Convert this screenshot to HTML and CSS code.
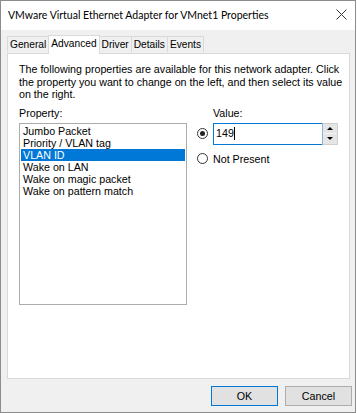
FILE: index.html
```html
<!DOCTYPE html>
<html lang="en">
<head>
    <meta charset="UTF-8">
    <title>VMware Virtual Ethernet Adapter for VMnet1 Properties</title>
    <link rel="stylesheet" href="styles.css">
</head>
<body>
    <div class="window">
        <div class="titlebar">
            <span class="title">VMware Virtual Ethernet Adapter for VMnet1 Properties</span>
            <svg class="close" width="11" height="11" viewBox="0 0 11 11">
                <path d="M0.5 0.5 L10.5 10.5 M10.5 0.5 L0.5 10.5" stroke="#333" stroke-width="1" fill="none"/>
            </svg>
        </div>

        <div class="client">
            <div class="tabs">
                <div class="tab">General</div>
                <div class="tab active">Advanced</div>
                <div class="tab">Driver</div>
                <div class="tab">Details</div>
                <div class="tab">Events</div>
            </div>

            <div class="panel">
                <p class="explicacion">
                    The following properties are available for this network adapter. Click<br>
                    the property you want to change on the left, and then select its value<br>
                    on the right.
                </p>

                <div class="campos">
                    <div class="col-prop">
                        <label>Property:</label>
                        <ul class="lista">
                            <li>Jumbo Packet</li>
                            <li>Priority / VLAN tag</li>
                            <li class="sel">VLAN ID</li>
                            <li>Wake on LAN</li>
                            <li>Wake on magic packet</li>
                            <li>Wake on pattern match</li>
                        </ul>
                    </div>

                    <div class="col-valor">
                        <label class="valor-label">Value:</label>
                        <div class="fila">
                            <span class="radio checked"></span>
                            <div class="spin">
                                <div class="spin-input">149<span class="caret"></span></div>
                                <div class="spin-btns">
                                    <div class="spin-btn"><span class="arr up"></span></div>
                                    <div class="spin-btn"><span class="arr down"></span></div>
                                </div>
                            </div>
                        </div>
                        <div class="fila fila-np">
                            <span class="radio"></span>
                            <span>Not Present</span>
                        </div>
                    </div>
                </div>
            </div>

            <div class="botones">
                <button class="btn btn-ok">OK</button>
                <button class="btn">Cancel</button>
            </div>
        </div>
    </div>
</body>
</html>
```

FILE: styles.css
```css
html, body {
    margin: 0;
    padding: 0;
    background-color: #fff;
}
body {
    font-family: "Liberation Sans", Arial, sans-serif;
    font-size: 10.7px;
    color: #000;
}
.window {
    width: 356px;
    height: 413px;
    box-sizing: border-box;
    border: 1px solid #8c8c8c;
    display: flex;
    flex-direction: column;
    background-color: #f0f0f0;
}
.titlebar {
    height: 29px;
    background-color: #fff;
    display: flex;
    align-items: center;
    padding: 0 0 2px 7px;
    box-sizing: border-box;
}
.title {
    font-family: Lato, "Noto Sans", sans-serif;
    font-size: 10.5px;
    flex: 1;
    color: #000;
}
.close {
    margin-right: 8px;
}
.client {
    flex: 1;
    padding: 0 5px 0 6px;
    display: flex;
    flex-direction: column;
}
.tabs {
    display: flex;
    align-items: flex-end;
    height: 21px;
    margin-top: 2px;
    position: relative;
    z-index: 1;
}
.tab {
    height: 15px;
    line-height: 16px;
    font-size: 10.2px;
    padding: 0 2px;
    border: 1px solid #d9d9d9;
    border-bottom: none;
    border-right: none;
    background-color: #f0f0f0;
    margin-bottom: 1px;
}
.tab:last-child {
    border-right: 1px solid #d9d9d9;
}
.tab.active {
    height: 18px;
    line-height: 15px;
    background-color: #fff;
    border-right: 1px solid #d9d9d9;
    margin-bottom: -1px;
    padding: 0 2px;
}
.tab.active + .tab {
    border-left: none;
}
.panel {
    height: 326px;
    box-sizing: border-box;
    background-color: #fff;
    border: 1px solid #d9d9d9;
    padding: 9px 10px 0 11px;
}
.explicacion {
    margin: 0;
    line-height: 12.5px;
    white-space: nowrap;
}
.campos {
    display: flex;
    margin-top: 6px;
}
.col-prop {
    width: 168px;
    display: flex;
    flex-direction: column;
}
label {
    display: block;
    height: 13px;
    line-height: 13px;
    margin-bottom: 3px;
}
.lista {
    list-style: none;
    margin: 0;
    padding: 1px 1px;
    height: 182px;
    box-sizing: border-box;
    border: 1px solid #acacac;
}
.lista li {
    height: 12.2px;
    line-height: 12.2px;
    padding-left: 2px;
}
.lista li.sel {
    background-color: #0078d7;
    color: #fff;
}
.col-valor {
    margin-left: 10px;
}
.valor-label {
    margin-left: 16px;
    margin-bottom: 3px;
}
.fila {
    display: flex;
    align-items: center;
}
.fila-np {
    margin-top: 8px;
}
.radio {
    width: 11px;
    height: 11px;
    box-sizing: border-box;
    border: 1px solid #333;
    border-radius: 50%;
    background-color: #fff;
    margin-right: 5px;
    position: relative;
}
.radio.checked::after {
    content: "";
    position: absolute;
    left: 2px;
    top: 2px;
    width: 5px;
    height: 5px;
    border-radius: 50%;
    background-color: #222;
}
.spin {
    display: flex;
    height: 22px;
}
.spin-input {
    width: 109px;
    box-sizing: border-box;
    border: 1px solid #0078d7;
    border-right: none;
    padding: 3px 2px;
    line-height: 13px;
}
.caret {
    display: inline-block;
    width: 1px;
    height: 13px;
    background-color: #000;
    vertical-align: top;
}
.spin-btns {
    width: 16px;
    display: flex;
    flex-direction: column;
    border: 1px solid #cfcfcf;
    box-sizing: border-box;
    border-left: 1px solid #7fb8e8;
}
.spin-btn {
    flex: 1;
    background-color: #e5e5e5;
    display: flex;
    align-items: center;
    justify-content: center;
}
.spin-btn + .spin-btn {
    border-top: 1px solid #f4f4f4;
}
.arr {
    width: 0;
    height: 0;
    border-left: 3px solid transparent;
    border-right: 3px solid transparent;
}
.arr.up {
    border-bottom: 3px solid #000;
}
.arr.down {
    border-top: 3px solid #000;
}
.botones {
    display: flex;
    justify-content: flex-end;
    gap: 7px;
    margin-top: 7px;
    margin-right: -2px;
}
.btn {
    width: 67px;
    height: 20px;
    font-family: "Liberation Sans", Arial, sans-serif;
    font-size: 10.7px;
    background-color: #e1e1e1;
    border: 1px solid #adadad;
    padding: 0;
    color: #000;
}
.btn-ok {
    border: 1px solid #0078d7;
}
```
